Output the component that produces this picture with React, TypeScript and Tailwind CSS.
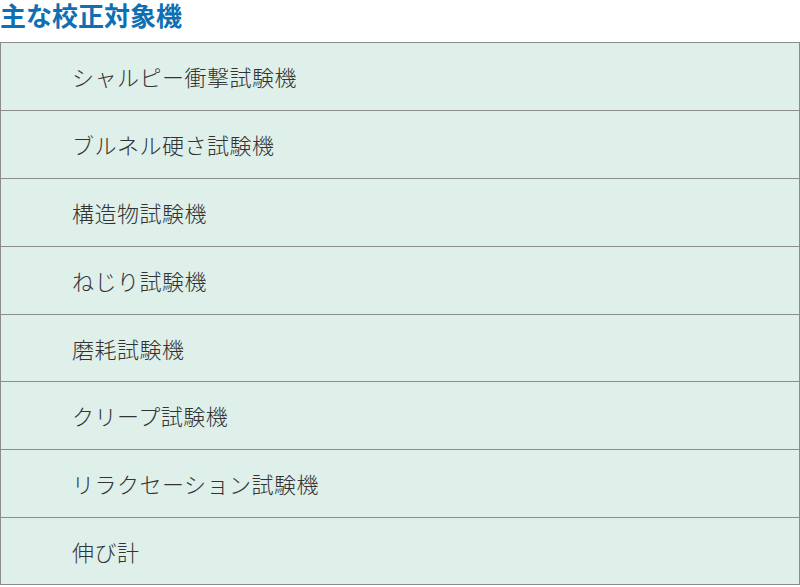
const items = [
  { label: 'シャルピー衝撃試験機', h: 'h-[68px]' },
  { label: 'ブルネル硬さ試験機', h: 'h-[68px]' },
  { label: '構造物試験機', h: 'h-[68px]' },
  { label: 'ねじり試験機', h: 'h-[68px]' },
  { label: '磨耗試験機', h: 'h-[67px]' },
  { label: 'クリープ試験機', h: 'h-[68px]' },
  { label: 'リラクセーション試験機', h: 'h-[68px]' },
  { label: '伸び計', h: 'h-[67px]' },
]

export default function App() {
  return (
    <div className="w-[800px] bg-white" style={{ fontFamily: '"Noto Sans CJK JP", "Noto Sans", sans-serif' }}>
      <h2 className="mb-[7px] h-[35px] text-[26px] font-bold leading-[30px] text-[#0e6fb3]">
        主な校正対象機
      </h2>
      <ul className="border-x border-t border-[#8c8c8c] bg-[#dfefe9]">
        {items.map((item) => (
          <li
            key={item.label}
            className={`flex ${item.h} items-center border-b border-[#8c8c8c] pl-[71px] text-[22px] font-light tracking-[0.5px] text-[#333333]`}
          >
            {item.label}
          </li>
        ))}
      </ul>
    </div>
  )
}
